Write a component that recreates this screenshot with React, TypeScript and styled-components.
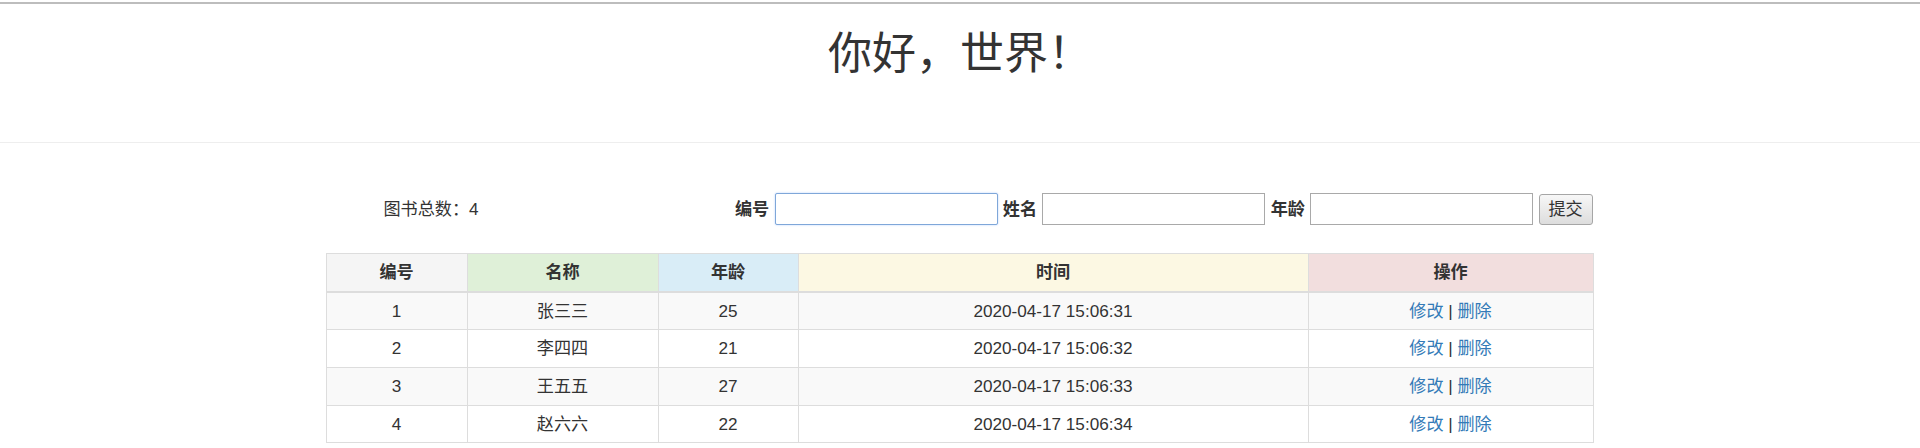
import React from "react";
import styled, { createGlobalStyle } from "styled-components";

const GlobalStyle = createGlobalStyle`
  html, body {
    margin: 0;
    padding: 0;
    background: #fff;
  }
  body {
    font-family: "Liberation Sans", "Noto Sans CJK SC", sans-serif;
    font-size: 17.14px;
    line-height: 24.5px;
    color: #333;
  }
  * { box-sizing: border-box; }
`;

const TopRule = styled.div`
  height: 2px;
  margin-top: 2px;
  background: #bdbdbd;
`;

const Header = styled.header`
  height: 139px;
  padding-top: 26px;
  border-bottom: 1px solid #eee;
  text-align: center;
`;

const Title = styled.h1`
  margin: 0;
  font-size: 44px;
  line-height: 48.5px;
  font-weight: 400;
  color: #333;
`;

const Main = styled.main`
  width: 1267px;
  margin: 0 auto;
  padding-top: 50px;
  position: relative;
  left: -1px;
`;

const Toolbar = styled.div`
  display: flex;
  align-items: center;
  height: 32px;
`;

const Count = styled.div`
  width: 211px;
  text-align: center;
`;

const Form = styled.form`
  flex: 1;
  display: flex;
  align-items: center;
  justify-content: flex-end;
  gap: 5.3px;
`;

const Label = styled.label`
  font-weight: bold;
`;

const Input = styled.input<{ $focused?: boolean }>`
  width: 223px;
  height: 32px;
  padding: 1px 4px;
  font: inherit;
  border: 1px solid ${(p) => (p.$focused ? "#7fa7d9" : "#a9a9a9")};
  border-radius: ${(p) => (p.$focused ? "2px" : "0")};
  box-shadow: ${(p) => (p.$focused ? "0 0 2px rgba(77,144,254,0.45)" : "none")};
  background: #fff;
  outline: none;
`;

const Button = styled.button`
  width: 54px;
  height: 31px;
  padding: 0;
  font: inherit;
  color: #333;
  border: 1px solid #a6a6a6;
  border-radius: 3px;
  background: linear-gradient(#f7f7f7, #dddddd);
`;

const Table = styled.table`
  width: 1267px;
  margin-top: 28px;
  border-collapse: collapse;
  table-layout: fixed;
  border: 1px solid #ddd;
`;

const Col = styled.col<{ $w: number }>`
  width: ${(p) => p.$w}px;
`;

const Th = styled.th<{ $bg: string }>`
  padding: 6.1px;
  border: 1px solid #ddd;
  border-bottom-width: 2px;
  background: ${(p) => p.$bg};
  font-weight: bold;
  text-align: center;
`;

const Tr = styled.tr<{ $striped: boolean }>`
  background: ${(p) => (p.$striped ? "#f9f9f9" : "#fff")};
`;

const Td = styled.td`
  padding: 6.1px;
  border: 1px solid #ddd;
  text-align: center;
`;

const Link = styled.a`
  color: #337ab7;
  text-decoration: none;
`;

const headers = [
  { label: "编号", bg: "#f5f5f5", w: 141 },
  { label: "名称", bg: "#dff0d8", w: 191 },
  { label: "年龄", bg: "#d9edf7", w: 140 },
  { label: "时间", bg: "#fcf8e3", w: 510 },
  { label: "操作", bg: "#f2dede", w: 285 },
];

const rows = [
  { id: 1, name: "张三三", age: 25, time: "2020-04-17 15:06:31" },
  { id: 2, name: "李四四", age: 21, time: "2020-04-17 15:06:32" },
  { id: 3, name: "王五五", age: 27, time: "2020-04-17 15:06:33" },
  { id: 4, name: "赵六六", age: 22, time: "2020-04-17 15:06:34" },
];

export default function App() {
  return (
    <>
      <GlobalStyle />
      <TopRule />
      <Header>
        <Title>你好，世界！</Title>
      </Header>
      <Main>
        <Toolbar>
          <Count>图书总数：4</Count>
          <Form onSubmit={(e) => e.preventDefault()}>
            <Label>编号</Label>
            <Input $focused />
            <Label>姓名</Label>
            <Input />
            <Label>年龄</Label>
            <Input />
            <Button type="submit">提交</Button>
          </Form>
        </Toolbar>
        <Table>
          <colgroup>
            {headers.map((h) => (
              <Col key={h.label} $w={h.w} />
            ))}
          </colgroup>
          <thead>
            <tr>
              {headers.map((h) => (
                <Th key={h.label} $bg={h.bg}>
                  {h.label}
                </Th>
              ))}
            </tr>
          </thead>
          <tbody>
            {rows.map((r, i) => (
              <Tr key={r.id} $striped={i % 2 === 0}>
                <Td>{r.id}</Td>
                <Td>{r.name}</Td>
                <Td>{r.age}</Td>
                <Td>{r.time}</Td>
                <Td>
                  <Link href="#">修改</Link> | <Link href="#">删除</Link>
                </Td>
              </Tr>
            ))}
          </tbody>
        </Table>
      </Main>
    </>
  );
}
